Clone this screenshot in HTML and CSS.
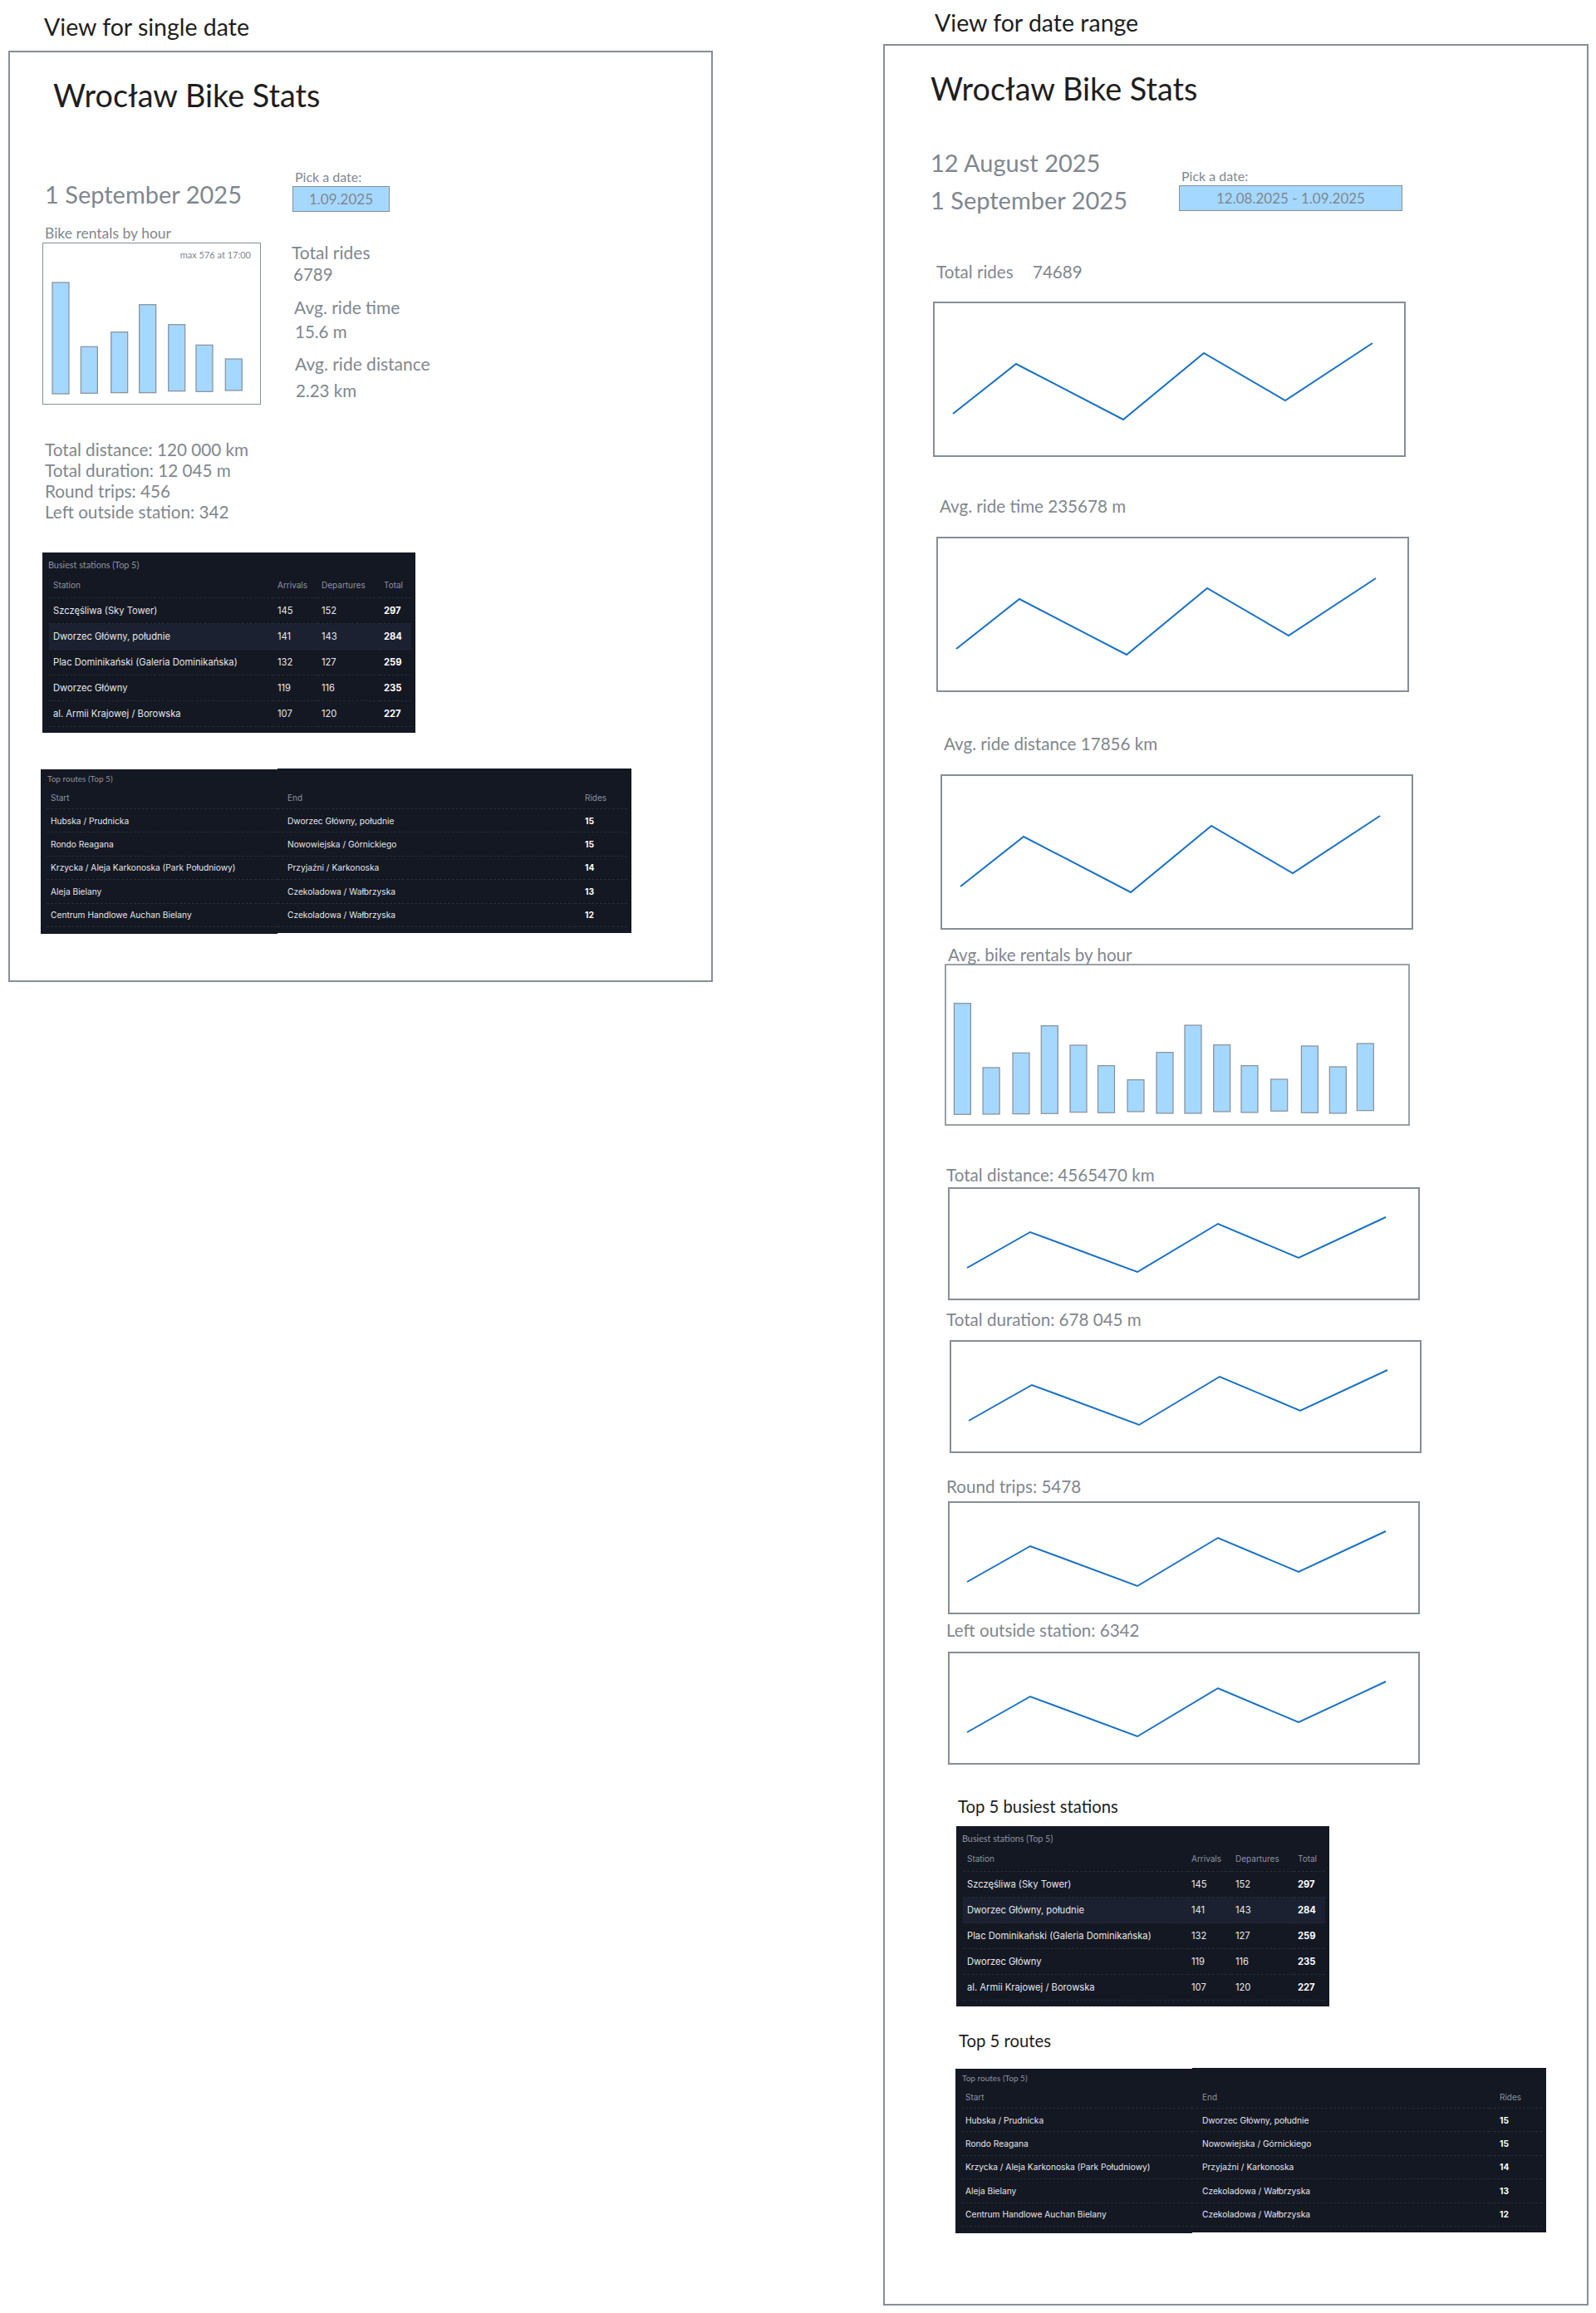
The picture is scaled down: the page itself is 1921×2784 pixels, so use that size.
FILE: index.html
```html
<!DOCTYPE html>
<html lang="en">
<head>
    <meta charset="UTF-8">
    <meta name="viewport" content="width=device-width, initial-scale=1.0">
    <title>Wrocław Bike Stats</title>
    <link rel="stylesheet" href="styles.css">
</head>
<body>
    <div class="page">
        <!-- single date -->
        <div class="view view-single">
            <p class="view-label">View for single date</p>
            <div class="frame">
                <h1>Wrocław Bike Stats</h1>
                <div class="head">
                    <div class="dates">
                        <p class="date">1 September 2025</p>
                    </div>
                    <div class="picker">
                        <label for="day">Pick a date:</label>
                        <input type="text" id="day" value="1.09.2025">
                    </div>
                </div>
                <div class="overview">
                    <div class="hours">
                        <p class="hours-title">Bike rentals by hour</p>
                        <div class="hours-box">
                            <p class="hours-max">max 576 at 17:00</p>
                            <svg class="bars">
                                <rect x="11" y="47" width="20" height="134"/>
                                <rect x="45.3" y="124.3" width="20" height="56"/>
                                <rect x="81.7" y="106.7" width="20" height="73"/>
                                <rect x="115.7" y="73.7" width="20" height="106"/>
                                <rect x="150.7" y="97.7" width="20" height="80"/>
                                <rect x="184" y="122.3" width="20" height="56"/>
                                <rect x="219.3" y="139" width="20" height="38"/>
                            </svg>
                        </div>
                    </div>
                    <div class="stats">
                        <div class="stat">
                            <p>Total rides</p>
                            <p class="stat-value">6789</p>
                        </div>
                        <div class="stat stat-time">
                            <p>Avg. ride time</p>
                            <p class="stat-value">15.6 m</p>
                        </div>
                        <div class="stat stat-distance">
                            <p>Avg. ride distance</p>
                            <p class="stat-value">2.23 km</p>
                        </div>
                    </div>
                </div>
                <div class="totals">
                    <p>Total distance: 120 000 km</p>
                    <p>Total duration: 12 045 m</p>
                    <p>Round trips: 456</p>
                    <p>Left outside station: 342</p>
                </div>
                <div class="dark-card stations stations-single">
                    <p class="card-caption">Busiest stations (Top 5)</p>
                    <table>
                        <thead>
                            <tr><th class="col-station">Station</th><th class="col-arrivals">Arrivals</th><th class="col-departures">Departures</th><th class="col-total">Total</th></tr>
                        </thead>
                        <tbody>
                            <tr><td>Szczęśliwa (Sky Tower)</td><td>145</td><td>152</td><td class="num-strong">297</td></tr>
                            <tr class="row-hover"><td>Dworzec Główny, południe</td><td>141</td><td>143</td><td class="num-strong">284</td></tr>
                            <tr><td>Plac Dominikański (Galeria Dominikańska)</td><td>132</td><td>127</td><td class="num-strong">259</td></tr>
                            <tr><td>Dworzec Główny</td><td>119</td><td>116</td><td class="num-strong">235</td></tr>
                            <tr><td>al. Armii Krajowej / Borowska</td><td>107</td><td>120</td><td class="num-strong">227</td></tr>
                        </tbody>
                    </table>
                </div>
                <div class="routes routes-single">
                    <div class="dark-card routes-start">
                        <p class="card-caption">Top routes (Top 5)</p>
                        <table>
                            <thead><tr><th>Start</th></tr></thead>
                            <tbody>
                                <tr><td>Hubska / Prudnicka</td></tr>
                                <tr><td>Rondo Reagana</td></tr>
                                <tr><td>Krzycka / Aleja Karkonoska (Park Południowy)</td></tr>
                                <tr><td>Aleja Bielany</td></tr>
                                <tr><td>Centrum Handlowe Auchan Bielany</td></tr>
                            </tbody>
                        </table>
                    </div>
                    <div class="dark-card routes-end">
                        <table>
                            <thead><tr><th class="col-end">End</th><th class="col-rides">Rides</th></tr></thead>
                            <tbody>
                                <tr><td>Dworzec Główny, południe</td><td class="num-strong">15</td></tr>
                                <tr><td>Nowowiejska / Górnickiego</td><td class="num-strong">15</td></tr>
                                <tr><td>Przyjaźni / Karkonoska</td><td class="num-strong">14</td></tr>
                                <tr><td>Czekoladowa / Wałbrzyska</td><td class="num-strong">13</td></tr>
                                <tr><td>Czekoladowa / Wałbrzyska</td><td class="num-strong">12</td></tr>
                            </tbody>
                        </table>
                    </div>
                </div>
            </div>
        </div>

        <!-- date range -->
        <div class="view view-range">
            <p class="view-label">View for date range</p>
            <div class="frame">
                <h1>Wrocław Bike Stats</h1>
                <div class="head">
                    <div class="dates">
                        <p class="date">12 August 2025</p>
                        <p class="date">1 September 2025</p>
                    </div>
                    <div class="picker">
                        <label for="range">Pick a date:</label>
                        <input type="text" id="range" value="12.08.2025 - 1.09.2025">
                    </div>
                </div>

                <div class="metric metric-rides">
                    <p class="metric-title">Total rides <span class="metric-value">74689</span></p>
                    <svg class="line-chart"><polyline points="22,133 98,73 227,140 324,60 422,117 527,48"/></svg>
                </div>
                <div class="metric metric-time">
                    <p class="metric-title">Avg. ride time 235678 m</p>
                    <svg class="line-chart"><polyline points="22,133 98,73 227,140 324,60 422,117 527,48"/></svg>
                </div>
                <div class="metric metric-distance">
                    <p class="metric-title">Avg. ride distance 17856 km</p>
                    <svg class="line-chart"><polyline points="22,133 98,73 227,140 324,60 422,117 527,48"/></svg>
                </div>
                <div class="metric metric-hours">
                    <p class="metric-title">Avg. bike rentals by hour</p>
                    <svg class="bars bars-wide">
                        <rect x="9.4" y="45.7" width="20" height="133.6"/>
                        <rect x="44.1" y="123" width="20" height="56"/>
                        <rect x="80" y="105.3" width="20" height="73.4"/>
                        <rect x="114.3" y="72.7" width="20" height="105.6"/>
                        <rect x="149" y="96" width="20" height="80.7"/>
                        <rect x="182.5" y="120.7" width="20" height="56.6"/>
                        <rect x="218" y="137.7" width="20" height="38.3"/>
                        <rect x="253" y="104.7" width="20" height="73.3"/>
                        <rect x="287" y="72" width="20" height="106"/>
                        <rect x="321.7" y="95.7" width="20" height="80.3"/>
                        <rect x="355" y="120.7" width="20" height="56.3"/>
                        <rect x="390.7" y="137" width="20" height="38.3"/>
                        <rect x="427.4" y="97" width="20" height="80.3"/>
                        <rect x="461.3" y="122" width="20" height="56"/>
                        <rect x="494.3" y="94" width="20" height="80.7"/>
                    </svg>
                </div>
                <div class="metric metric-total-distance">
                    <p class="metric-title">Total distance: 4565470 km</p>
                    <svg class="line-chart line-chart-small"><polyline points="21,95 97,52 226,100 323,42 420,83 525,34"/></svg>
                </div>
                <div class="metric metric-duration">
                    <p class="metric-title">Total duration: 678 045 m</p>
                    <svg class="line-chart line-chart-small"><polyline points="21,95 97,52 226,100 323,42 420,83 525,34"/></svg>
                </div>
                <div class="metric metric-round">
                    <p class="metric-title">Round trips: 5478</p>
                    <svg class="line-chart line-chart-small"><polyline points="21,95 97,52 226,100 323,42 420,83 525,34"/></svg>
                </div>
                <div class="metric metric-outside">
                    <p class="metric-title">Left outside station: 6342</p>
                    <svg class="line-chart line-chart-small"><polyline points="21,95 97,52 226,100 323,42 420,83 525,34"/></svg>
                </div>

                <p class="top-title top-title-stations">Top 5 busiest stations</p>
                <div class="dark-card stations stations-range">
                    <p class="card-caption">Busiest stations (Top 5)</p>
                    <table>
                        <thead>
                            <tr><th class="col-station">Station</th><th class="col-arrivals">Arrivals</th><th class="col-departures">Departures</th><th class="col-total">Total</th></tr>
                        </thead>
                        <tbody>
                            <tr><td>Szczęśliwa (Sky Tower)</td><td>145</td><td>152</td><td class="num-strong">297</td></tr>
                            <tr class="row-hover"><td>Dworzec Główny, południe</td><td>141</td><td>143</td><td class="num-strong">284</td></tr>
                            <tr><td>Plac Dominikański (Galeria Dominikańska)</td><td>132</td><td>127</td><td class="num-strong">259</td></tr>
                            <tr><td>Dworzec Główny</td><td>119</td><td>116</td><td class="num-strong">235</td></tr>
                            <tr><td>al. Armii Krajowej / Borowska</td><td>107</td><td>120</td><td class="num-strong">227</td></tr>
                        </tbody>
                    </table>
                </div>

                <p class="top-title top-title-routes">Top 5 routes</p>
                <div class="routes routes-range">
                    <div class="dark-card routes-start">
                        <p class="card-caption">Top routes (Top 5)</p>
                        <table>
                            <thead><tr><th>Start</th></tr></thead>
                            <tbody>
                                <tr><td>Hubska / Prudnicka</td></tr>
                                <tr><td>Rondo Reagana</td></tr>
                                <tr><td>Krzycka / Aleja Karkonoska (Park Południowy)</td></tr>
                                <tr><td>Aleja Bielany</td></tr>
                                <tr><td>Centrum Handlowe Auchan Bielany</td></tr>
                            </tbody>
                        </table>
                    </div>
                    <div class="dark-card routes-end">
                        <table>
                            <thead><tr><th class="col-end">End</th><th class="col-rides">Rides</th></tr></thead>
                            <tbody>
                                <tr><td>Dworzec Główny, południe</td><td class="num-strong">15</td></tr>
                                <tr><td>Nowowiejska / Górnickiego</td><td class="num-strong">15</td></tr>
                                <tr><td>Przyjaźni / Karkonoska</td><td class="num-strong">14</td></tr>
                                <tr><td>Czekoladowa / Wałbrzyska</td><td class="num-strong">13</td></tr>
                                <tr><td>Czekoladowa / Wałbrzyska</td><td class="num-strong">12</td></tr>
                            </tbody>
                        </table>
                    </div>
                </div>
            </div>
        </div>
    </div>
</body>
</html>
```

FILE: styles.css
```css
body {
    margin: 0;
    padding: 0;
    background-color: #fff;
    color: #7f878f;
    font-family: Lato, "Noto Sans", sans-serif;
}

p {
    margin: 0;
}

.page {
    display: flex;
    align-items: flex-start;
    width: 1921px;
}

.view-single {
    width: 848px;
    margin-left: 10px;
    padding-top: 16px;
}

.view-range {
    width: 849px;
    margin-left: 205px;
    padding-top: 11px;
}

.view-label {
    font-size: 28.5px;
    line-height: 32px;
    color: #1e1e1e;
}

.view-single .view-label {
    margin-left: 43px;
    margin-bottom: 13px;
}

.view-range .view-label {
    margin-left: 62px;
    margin-bottom: 10px;
}

.frame {
    box-sizing: border-box;
    border: 2px solid #868e96;
    padding-top: 30px;
}

.view-single .frame {
    height: 1121px;
}

.view-range .frame {
    height: 2722px;
}

h1 {
    margin: 0;
    font-size: 37.8px;
    font-weight: 400;
    line-height: 44px;
    color: #1e1e1e;
}

.view-single h1 {
    margin-left: 52px;
}

.view-range h1 {
    margin-left: 55px;
}

/* date and picker */
.head {
    display: flex;
}

.view-single .head {
    margin-top: 66px;
    margin-left: 42px;
}

.view-range .head {
    margin-top: 49px;
    margin-left: 55px;
}

.view-single .dates {
    width: 298px;
    padding-top: 13px;
}

.view-range .dates {
    width: 299px;
}

.date {
    font-size: 29px;
    line-height: 36px;
}

.date + .date {
    margin-top: 9px;
}

.view-range .picker {
    margin-top: 24px;
}

.picker label {
    display: block;
    margin-left: 3px;
    margin-bottom: 1px;
    font-size: 16px;
    line-height: 20px;
}

.picker input {
    display: block;
    box-sizing: border-box;
    height: 31px;
    padding: 0;
    background-color: #a5d8ff;
    border: 1px solid #868e96;
    color: #7f878f;
    font-family: inherit;
    font-size: 17px;
    text-align: center;
}

#day {
    width: 117px;
}

#range {
    width: 269px;
}

/* single date overview */
.overview {
    display: flex;
    margin-top: 16px;
    margin-left: 39px;
}

.hours-title {
    margin-left: 3px;
    margin-bottom: 1px;
    font-size: 17.5px;
    line-height: 20px;
}

.hours-box {
    position: relative;
    width: 263px;
    height: 195px;
}

.hours-max {
    position: absolute;
    top: 7px;
    right: 12px;
    font-size: 11px;
    line-height: 16px;
}

.bars {
    display: block;
    box-sizing: border-box;
    width: 100%;
    height: 100%;
    border: 1px solid #868e96;
}

.bars rect {
    fill: #a5d8ff;
    stroke: #868e96;
    stroke-width: 1.2;
}

.bars-wide {
    width: 560px;
    height: 195px;
    border-width: 2px;
    border-color: #9aa1a8;
}

.stats {
    margin-left: 37px;
    padding-top: 20px;
    font-size: 21px;
    line-height: 26px;
}

.stat-value {
    margin-left: 2px;
    font-size: 20.5px;
}

.stat-time {
    margin-top: 14px;
    margin-left: 3px;
}

.stat-time .stat-value {
    margin-top: 3px;
    margin-left: 1px;
}

.stat-distance {
    margin-top: 13px;
    margin-left: 4px;
}

.stat-distance .stat-value {
    margin-top: 6px;
    margin-left: 1px;
}

.totals {
    margin-top: 42px;
    margin-left: 42px;
    font-size: 20.7px;
    line-height: 25px;
}

/* dark tables */
.dark-card {
    box-sizing: border-box;
    background-color: #141823;
}

.dark-card table {
    border-collapse: collapse;
    table-layout: fixed;
    font-family: Inter, "Noto Sans", sans-serif;
}

.dark-card th {
    padding: 0 0 0 5px;
    font-size: 10px;
    font-weight: 400;
    color: #8d93a0;
    text-align: left;
    border-bottom: 1px dashed #262b38;
}

.dark-card td {
    padding: 0 0 0 5px;
    color: #e4e6eb;
    white-space: nowrap;
    border-bottom: 1px dashed #262b38;
}

.card-caption {
    font-size: 10px;
    line-height: 14px;
    color: #8d93a0;
}

.num-strong {
    font-weight: 700;
}

.dark-card td.num-strong {
    color: #fff;
}

.stations {
    width: 449px;
    height: 217px;
    padding: 8px 5px 0 8px;
}

.stations-single {
    margin-top: 36px;
    margin-left: 39px;
}

.stations-range {
    margin-top: 11px;
    margin-left: 86px;
}

.stations .card-caption {
    margin-left: -1px;
    font-size: 10.8px;
}

.stations table {
    width: 436px;
    margin-top: 2px;
}

.stations th {
    height: 30px;
}

.stations td {
    height: 30px;
    font-size: 11.2px;
}

.col-station {
    width: 265px;
}

.col-arrivals {
    width: 48px;
}

.col-departures {
    width: 70px;
}

.col-total {
    width: 33px;
}

.row-hover {
    background-color: #1b2130;
}

/* routes table is two pieces pasted side by side */
.routes {
    display: flex;
    align-items: flex-start;
}

.routes-single {
    margin-top: 43px;
    margin-left: 37px;
}

.routes-range {
    margin-top: 20px;
    margin-left: 85px;
}

.routes-start {
    width: 285px;
    height: 198px;
    margin-top: 1px;
    padding: 4px 0 0 7px;
}

.routes-start .card-caption {
    margin-left: 1px;
}

.routes-end {
    width: 426px;
    height: 198px;
    padding-top: 22px;
}

.routes table {
    font-size: 10px;
}

.routes-start table {
    width: 278px;
    margin-top: 3px;
}

.routes-end table {
    width: 421px;
}

.routes th {
    height: 26px;
}

.routes td {
    height: 27.4px;
    font-size: 10.2px;
}

.routes-end th,
.routes-end td {
    padding-left: 12px;
}

.col-end {
    width: 346px;
}

.col-rides {
    width: 51px;
}

/* date range metrics */
.metric-title {
    font-size: 20.6px;
    line-height: 26px;
}

.metric-value {
    margin-left: 18px;
}

.line-chart {
    display: block;
    box-sizing: border-box;
    width: 569px;
    height: 187px;
    border: 2px solid #868e96;
}

.line-chart-small {
    width: 568px;
    height: 136px;
}

.line-chart polyline {
    fill: none;
    stroke: #1971c2;
    stroke-width: 2;
}

.metric-rides { margin-top: 55px; }
.metric-rides .metric-title { margin-left: 62px; margin-bottom: 23px; }
.metric-rides .line-chart { margin-left: 58px; }

.metric-time { margin-top: 46px; }
.metric-time .metric-title { margin-left: 66px; margin-bottom: 24px; }
.metric-time .line-chart { margin-left: 62px; }

.metric-distance { margin-top: 49px; }
.metric-distance .metric-title { margin-left: 71px; margin-bottom: 24px; }
.metric-distance .line-chart { margin-left: 67px; }

.metric-hours { margin-top: 17px; }
.metric-hours .metric-title { margin-left: 76px; margin-bottom: -2px; }
.metric-hours .bars { margin-left: 72px; }

.metric-total-distance { margin-top: 46px; }
.metric-total-distance .metric-title { margin-left: 74px; margin-bottom: 2px; }
.metric-total-distance .line-chart { margin-left: 76px; }

.metric-duration { margin-top: 10px; }
.metric-duration .metric-title { margin-left: 74px; margin-bottom: 12px; }
.metric-duration .line-chart { margin-left: 78px; }

.metric-round { margin-top: 27px; }
.metric-round .metric-title { margin-left: 74px; margin-bottom: 5px; }
.metric-round .line-chart { margin-left: 76px; }

.metric-outside { margin-top: 6px; }
.metric-outside .metric-title { margin-left: 74px; margin-bottom: 13px; }
.metric-outside .line-chart { margin-left: 76px; }

.top-title {
    font-size: 20.3px;
    line-height: 26px;
    color: #1e1e1e;
}

.top-title-stations {
    margin-top: 37px;
    margin-left: 88px;
}

.top-title-routes {
    margin-top: 28px;
    margin-left: 89px;
}
```
